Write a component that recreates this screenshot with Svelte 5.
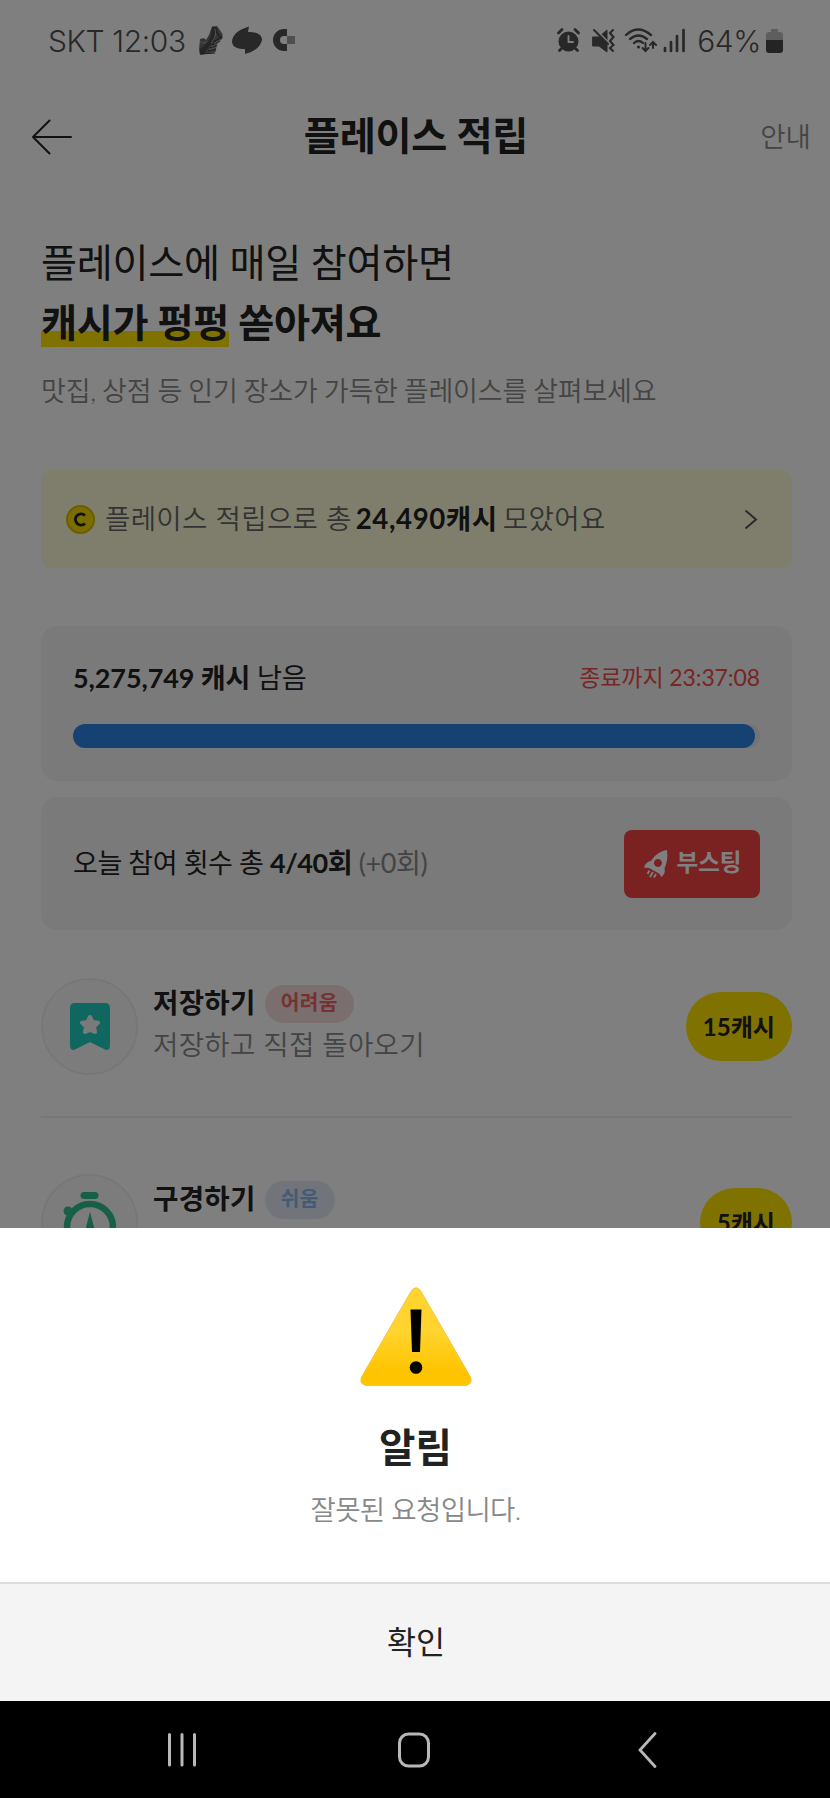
<script lang="ts">
  /**
   * Place reward screen
   *
   * Daily place missions with an alert sheet on top
   */

  interface Mission {
    icon: 'bookmark' | 'timer';
    title: string;
    level: string;
    tone: 'hard' | 'easy';
    desc: string;
    reward: string;
  }

  const missions: Mission[] = [
    {
      icon: 'bookmark',
      title: '저장하기',
      level: '어려움',
      tone: 'hard',
      desc: '저장하고 직접 돌아오기',
      reward: '15캐시',
    },
    {
      icon: 'timer',
      title: '구경하기',
      level: '쉬움',
      tone: 'easy',
      desc: '플레이스 구경하기',
      reward: '5캐시',
    },
  ];

  const remaining = 99.3;
</script>

<div class="screen">
  <div class="page">
    <div class="status">
      <span class="status__text">SKT 12:03</span>
      <svg class="status__apps" width="98" height="32" viewBox="0 0 98 32">
        <path d="M14 1.500 L19 1 L24.500 9 L24.500 13 L19 19 L17.500 27 L2 30 L1 25 L2 14 L6 13 L8 15 L11 10 Z" fill="#6a6a6a" />
        <path d="M14 2 Q14 12 10 17 Q6 22 2 24 V29 L6 29 Q9 24 13 19 Q18 13 17 2 Z" fill="#4a4a4a" />
        <path d="M18 3 Q18 9 23 12 M15 17 L24 12 M14 20 L22 16 M12 23 L19 20 M10 26 L18 24 M3 29 L17 28" stroke="#3c3c3c" stroke-width="1.200" fill="none" />
        <path d="M17 4 Q19 12 13 18 M16 18.500 L24 14 M13 22 L20 18.500 M11 24.700 L18 22.500 M2 16 Q5 20 9 16" stroke="#a5a5a5" stroke-width="1" fill="none" />
        <path d="M51 1.500 C39 5 34 11 34 17 C35 23 40 24 47 24 V29 C57 27 64 20 64 14 C63 8 57 7 50 7 Z" fill="#505050" />
        <path d="M89 4 H86 A11 11 0 0 0 86 26 H89 V19 H86 A4 4 0 0 1 86 11 H89 Z" fill="#505050" />
        <rect x="89" y="11" width="8" height="8" fill="#a0a0a0" />
      </svg>
      <svg class="status__signals" width="130" height="26" viewBox="0 0 130 26">
        <g fill="none" stroke="#505050" stroke-linecap="round">
          <circle cx="11.500" cy="13.500" r="10" fill="#505050" stroke="none" />
          <path d="M1.500 5 L5 1.500 M21.500 5 L18 1.500 M4 21 L2.500 22.500 M19 21 L20.500 22.500" stroke-width="2.800" />
          <path d="M11.500 8 V14 H16" stroke="#fff" stroke-width="1.800" />
          <path d="M36 9 H42 L50 2 V24 L42 18 H36 Z" fill="#505050" stroke-width="1" />
          <path d="M36 -1 L52 15" stroke="#fff" stroke-width="2" />
          <path d="M37 2 L51 16" stroke-width="2" />
          <path d="M56 2 L53 5 L56.500 9 L53 13 L56.500 17 L53 20 L56 23" stroke-width="2.100" />
          <path d="M69 7 Q81 -4 94 7 M73 11 Q81.500 4 90 11 M77 15 Q81.500 11 86 15" stroke-width="2.300" />
          <circle cx="81.500" cy="19" r="1.600" fill="#505050" stroke="none" />
          <path d="M88.500 15 V23 M85.500 20 L88.500 23 L91.500 20 M96 20 V14 M93 17 L96 14 L99 17" stroke-width="2" />
          <path d="M108 20 V23 M114 14 V23 M120 8 V23 M126.500 2 V23" stroke-width="2.700" />
        </g>
      </svg>
      <span class="status__text">64%</span>
      <svg class="status__battery" width="17" height="24" viewBox="0 0 17 24">
        <path d="M5 3 V0 H12 V3 H14 Q17 3 17 6 V11 H0 V6 Q0 3 3 3 Z" fill="#bcbcbc" />
        <path d="M0 11 H17 V21 Q17 24 14 24 H3 Q0 24 0 21 Z" fill="#484848" />
      </svg>
    </div>

    <header class="header">
      <svg width="40" height="36" viewBox="0 0 40 36" fill="none" stroke="#222" stroke-width="2" stroke-linecap="round" stroke-linejoin="round">
        <path d="M39 18 H1 M17.500 1.500 L1 18 L17.500 34.500" />
      </svg>
      <h1 class="header__title">플레이스 적립</h1>
      <span class="header__guide">안내</span>
    </header>

    <main class="content">
      <h2 class="intro">플레이스에 매일 참여하면</h2>
      <h2 class="intro intro--strong"><mark>캐시가 펑펑</mark> 쏟아져요</h2>
      <p class="intro__desc">맛집, 상점 등 인기 장소가 가득한 플레이스를 살펴보세요</p>

      <div class="banner">
        <svg width="29" height="29" viewBox="0 0 29 29">
          <circle cx="14.500" cy="14.500" r="13.500" fill="#f5dc00" stroke="#d9bd00" stroke-width="2" />
          <path d="M19 10.500 A5.600 5.600 0 1 0 19 18.500" fill="none" stroke="#222" stroke-width="3" />
        </svg>
        <span class="banner__text">플레이스 적립으로 총</span>
        <strong class="banner__sum">24,490캐시</strong>
        <span class="banner__tail">모았어요</span>
        <svg class="banner__chevron" width="14" height="21" viewBox="0 0 14 21" fill="none" stroke="#555" stroke-width="2">
          <path d="M1.500 1.500 L12 10.500 L1.500 19.500" />
        </svg>
      </div>

      <section class="card card--cash">
        <div class="card__row">
          <span class="card__text"><strong>5,275,749 캐시</strong> 남음</span>
          <span class="card__timer">종료까지 23:37:08</span>
        </div>
        <div class="bar">
          <div class="bar__fill" style="width: {remaining}%"></div>
        </div>
      </section>

      <section class="card card--count">
        <span class="card__text card__text--count">오늘 참여 횟수 총 <strong>4/40회</strong> <em>(+0회)</em></span>
        <button class="boost">
          <svg width="24" height="28" viewBox="0 0 24 28">
            <path d="M23 0 C16 1 10 6 7 11 C4 11 1 14 0 17.500 L5 18 L15 23.500 L17.500 27 C20 25 21.500 22 20.500 18.500 C23 13 24 7 23 0 Z M14 9 A4 4 0 1 1 13.900 9 Z" fill="#fff" fill-rule="evenodd" />
            <path d="M5.500 20.500 L3.500 24 M9 22 L6 27 M12 24 L10 27.500" stroke="#fff" stroke-width="1.800" />
          </svg>
          <span class="boost__label">부스팅</span>
        </button>
      </section>

      <ul class="missions">
        {#each missions as mission}
          <li class="mission">
            <div class="mission__icon">
              {#if mission.icon === 'bookmark'}
                <svg width="40" height="48" viewBox="0 0 40 48">
                  <path d="M5 0 H35 Q40 0 40 5 V42 Q40 49 34 46 L20 39 L6 46 Q0 49 0 42 V5 Q0 0 5 0 Z" fill="#20cfc0" />
                  <path d="M20 14 L22.500 19 L28 19.700 L24 23.700 L25 29 L20 27 L15 29 L16 23.700 L12 19.700 L17.500 19 Z" fill="#f5f5f5" stroke="#f5f5f5" stroke-width="4" stroke-linejoin="round" />
                </svg>
              {:else}
                <svg width="54" height="62" viewBox="0 0 54 62">
                  <rect x="17.500" y="0" width="18" height="7" rx="3.500" fill="#2ec08c" />
                  <circle cx="5" cy="19" r="4.500" fill="#2ec08c" />
                  <circle cx="27" cy="35" r="23" fill="none" stroke="#2ec08c" stroke-width="6.500" />
                  <path d="M27 20 L31 35 Q31 40 27 40 Q23 40 23 35 Z" fill="#2ec08c" />
                </svg>
              {/if}
            </div>
            <div class="mission__body">
              <div class="mission__head">
                <strong class="mission__title">{mission.title}</strong>
                <span class="level level--{mission.tone}">{mission.level}</span>
              </div>
              <span class="mission__desc">{mission.desc}</span>
            </div>
            <span class="reward">{mission.reward}</span>
          </li>
        {/each}
      </ul>
    </main>
  </div>

  <div class="dim"></div>

  <div class="sheet" role="alertdialog" aria-label="알림">
    <div class="sheet__body">
      <svg width="112" height="100" viewBox="0 0 112 100">
        <defs>
          <linearGradient id="warn" x1="0" y1="0" x2="0" y2="1">
            <stop offset="0.450" stop-color="#ffd42e" />
            <stop offset="0.850" stop-color="#ffc400" />
          </linearGradient>
        </defs>
        <path d="M51.500 3.500 Q56 -2 60.500 3.500 L110.500 90 Q113 97 106 98.500 H6 Q-1 97 1.500 90 Z" fill="url(#warn)" stroke="#f3bd38" stroke-width="0.800" />
        <path d="M50.500 22.500 H61.500 L60 65 H52 Z" />
        <circle cx="56" cy="80.500" r="6.300" />
      </svg>
      <h3 class="sheet__title">알림</h3>
      <p class="sheet__message">잘못된 요청입니다.</p>
    </div>
    <button class="sheet__confirm">확인</button>
    <nav class="nav">
      <svg width="28" height="36" viewBox="0 0 28 36" stroke="#b8b8b8" stroke-width="3" stroke-linecap="round">
        <path d="M1.500 2.500 V33 M14 2.500 V33 M26.500 2.500 V33" />
      </svg>
      <svg class="nav__home" width="32" height="36" viewBox="0 0 32 36">
        <rect x="1.500" y="2" width="29" height="32" rx="9" fill="none" stroke="#b8b8b8" stroke-width="3" />
      </svg>
      <svg width="19" height="36" viewBox="0 0 19 36" fill="none" stroke="#b8b8b8" stroke-width="2.800" stroke-linecap="round">
        <path d="M17 1.500 L2 18 L17 34.500" />
      </svg>
    </nav>
  </div>
</div>

<style>
  :global(body) {
    margin: 0;
    background: #000;
  }

  .screen {
    position: relative;
    width: 830px;
    height: 1798px;
    overflow: hidden;
    background: #fff;
    color: #222;
    font-family: 'Lato', 'Noto Sans CJK KR', sans-serif;
    font-size: 27.6px;
  }

  h1,
  h2,
  h3,
  p,
  ul {
    margin: 0;
    padding: 0;
  }

  button {
    border: none;
    font-family: inherit;
  }

  svg {
    display: block;
    flex-shrink: 0;
  }

  span,
  strong {
    white-space: nowrap;
  }

  /* Status bar */
  .status {
    display: flex;
    align-items: center;
    height: 82px;
    padding: 0 47px 0 48px;
  }

  .status__text {
    color: #505050;
    font-family: 'Inter', sans-serif;
    font-size: 30px;
    font-weight: 350;
    letter-spacing: -0.4px;
  }

  .status__apps {
    margin-left: 12px;
  }

  .status__signals {
    margin: 0 10px 0 auto;
  }

  .status__battery {
    margin-left: 5px;
  }

  /* Header */
  .header {
    display: grid;
    grid-template-columns: 1fr auto 1fr;
    align-items: center;
    height: 110px;
    padding: 0 19px 0 32px;
  }

  .header__title {
    margin-right: 11px;
    padding-bottom: 4px;
    font-size: 39.2px;
    font-weight: 700;
    line-height: 56px;
    letter-spacing: -0.2px;
  }

  .header__guide {
    justify-self: end;
    padding-bottom: 5px;
    color: #888;
    font-weight: 350;
  }

  .content {
    padding: 40px 38px 0 41px;
  }

  /* Intro */
  .intro {
    font-size: 39.2px;
    font-weight: 400;
    line-height: 60px;
    letter-spacing: -0.3px;
  }

  .intro--strong {
    font-weight: 700;
  }

  .intro mark {
    padding-bottom: 2px;
    color: inherit;
    background: linear-gradient(transparent 67%, #ffe500 67%);
  }

  .intro__desc {
    margin-top: 19px;
    color: #888;
    font-size: 27px;
    font-weight: 350;
    line-height: 40px;
    letter-spacing: -0.2px;
    word-spacing: -1px;
    white-space: nowrap;
  }

  /* Banner */
  .banner {
    display: flex;
    align-items: center;
    height: 98px;
    margin-top: 59px;
    padding: 0 34px 0 25px;
    border-radius: 9px;
    background: #fffdd8;
    color: #666;
    font-weight: 350;
  }

  .banner__text,
  .banner__sum,
  .banner__tail {
    padding-bottom: 5px;
    letter-spacing: 0.3px;
  }

  .banner__text {
    margin-left: 10px;
  }

  .banner__sum {
    margin-left: 4px;
    color: #222;
    font-weight: 700;
    letter-spacing: 0.6px;
  }

  .banner__tail {
    margin-left: 5px;
  }

  .banner__chevron {
    margin-left: auto;
  }

  /* Cards */
  .card {
    box-sizing: border-box;
    padding: 32px;
    border-radius: 16px;
    background: #f4f4f4;
  }

  .card--cash {
    height: 155px;
    margin-top: 58px;
  }

  .card--count {
    display: flex;
    align-items: center;
    justify-content: space-between;
    height: 133px;
    margin-top: 16px;
  }

  .card__row {
    display: flex;
    align-items: center;
    justify-content: space-between;
    height: 36px;
    margin-bottom: 30px;
  }

  .card__text {
    font-size: 27px;
    letter-spacing: -0.1px;
  }

  .card__text--count {
    padding-bottom: 5px;
    letter-spacing: -0.42px;
  }

  .card__text em {
    color: #888;
    font-style: normal;
    font-weight: 400;
  }

  .card__timer {
    color: #f04a4a;
    font-size: 23px;
    letter-spacing: -0.1px;
  }

  .bar {
    height: 24px;
    border-radius: 12px;
    background: #e4e7ec;
  }

  .bar__fill {
    height: 100%;
    border-radius: 12px;
    background: #2c82e6;
  }

  .boost {
    display: flex;
    align-items: center;
    justify-content: center;
    gap: 8px;
    width: 136px;
    height: 68px;
    padding: 0 0 0 2px;
    border-radius: 8px;
    background: #f44343;
    color: #fff;
    font-size: 23.6px;
    font-weight: 700;
  }

  .boost__label {
    padding-bottom: 5px;
  }

  /* Missions */
  .missions {
    margin-top: 48px;
    list-style: none;
  }

  .mission {
    display: flex;
    align-items: center;
    height: 97px;
    margin-bottom: 49px;
    padding-bottom: 41px;
    border-bottom: 2px solid #f0f0f0;
  }

  .mission + .mission {
    margin-top: 56px;
  }

  .mission__icon {
    display: flex;
    align-items: center;
    justify-content: center;
    box-sizing: border-box;
    width: 97px;
    height: 97px;
    border: 2px solid #efefef;
    border-radius: 50%;
    background: #f8f8f8;
  }

  .mission__body {
    flex: 1;
    margin-left: 15px;
    padding-bottom: 3px;
  }

  .mission__head {
    display: flex;
    align-items: flex-start;
    gap: 9px;
    height: 40px;
    letter-spacing: 0.3px;
  }

  .mission__title {
    line-height: 38px;
  }

  .mission__desc {
    color: #888;
    font-weight: 350;
    line-height: 42px;
    letter-spacing: 0.25px;
  }

  .level {
    padding: 0 16px 4px;
    margin-top: 1px;
    border-radius: 20px;
    font-size: 20.3px;
    font-weight: 700;
    line-height: 34px;
  }

  .level--hard {
    background: #f6dcdc;
    color: #e86464;
  }

  .level--easy {
    background: #e2e8f6;
    color: #8ab4ea;
  }

  .reward {
    padding: 0 17px;
    border-radius: 35px;
    background: #ffe500;
    font-size: 24.1px;
    font-weight: 700;
    line-height: 69px;
  }

  .dim {
    position: absolute;
    inset: 0;
    background: rgba(0, 0, 0, 0.5);
  }

  /* Alert sheet */
  .sheet {
    position: absolute;
    right: 0;
    bottom: 0;
    left: 0;
    background: #fff;
  }

  .sheet__body {
    display: flex;
    flex-direction: column;
    align-items: center;
    box-sizing: border-box;
    height: 354px;
    padding: 59px 0 0 1px;
  }

  .sheet__title {
    margin-top: 32px;
    font-size: 39.6px;
    font-weight: 700;
    line-height: 56px;
  }

  .sheet__message {
    margin-top: 15px;
    color: #888;
    font-weight: 350;
    line-height: 40px;
    letter-spacing: -0.7px;
  }

  .sheet__confirm {
    display: block;
    box-sizing: border-box;
    width: 100%;
    height: 119px;
    padding: 0 0 5px 2px;
    border-top: 2px solid #ddd;
    background: #f4f4f4;
    color: #222;
    font-size: 31.6px;
  }

  .nav {
    display: flex;
    align-items: center;
    justify-content: space-between;
    box-sizing: border-box;
    height: 97px;
    padding: 0 173px 0 168px;
    background: #000;
  }

  .nav__home {
    margin-right: 7px;
  }
</style>
